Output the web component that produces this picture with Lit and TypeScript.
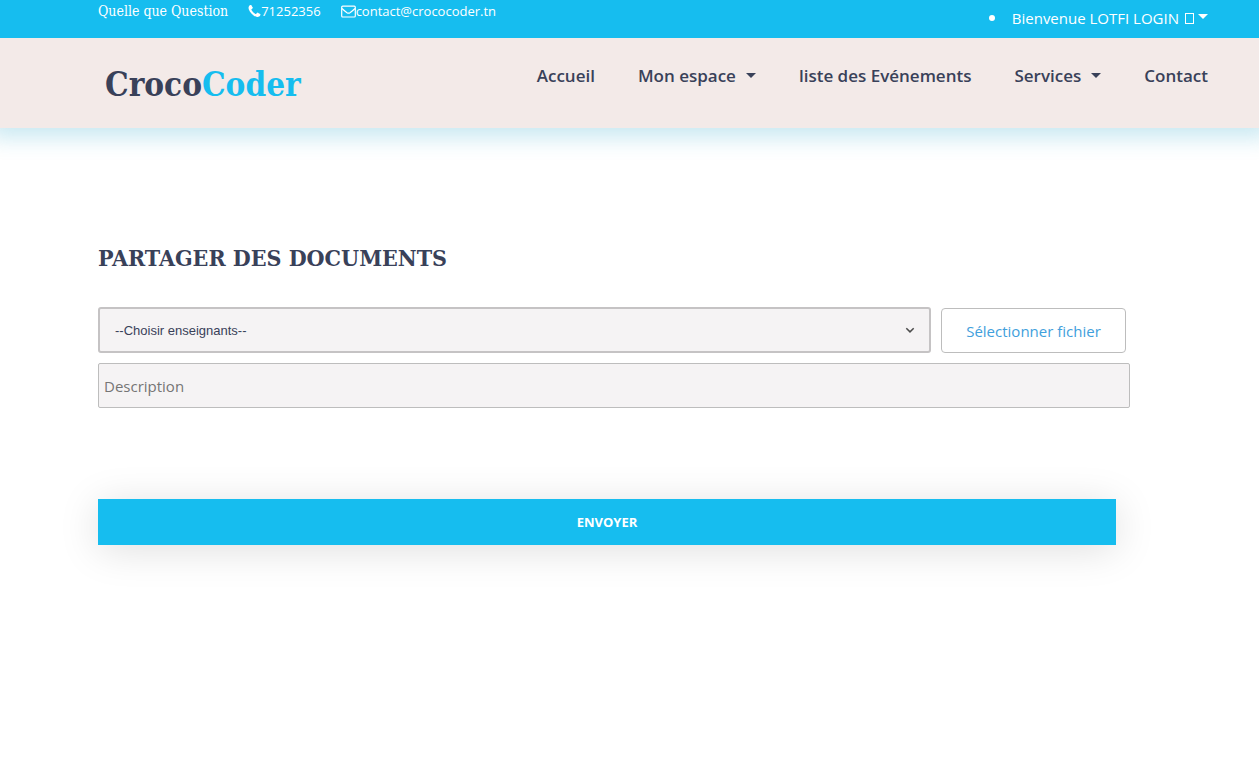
import { LitElement, html, css } from "lit";
import { customElement } from "lit/decorators.js";

@customElement("top-bar")
class TopBar extends LitElement {
  static styles = css`
    :host { display: block; background: #16bdef; color: #fff; font-size: 13px; line-height: 22px; }
    .bar { display: flex; justify-content: space-between; height: 38px; padding: 0 51px 0 98px; }
    .contact { display: flex; gap: 20px; }
    a { display: flex; align-items: center; color: inherit; text-decoration: none; height: 22px; }
    .question { font-family: "Roboto Slab", "DejaVu Serif Condensed", "DejaVu Serif", serif; font-stretch: condensed; font-size: 14px; }
    .user { margin: 7px 0 0; padding: 0; list-style: none; }
    .user li { display: flex; align-items: center; gap: 17px; }
    .dot { width: 6px; height: 6px; border-radius: 50%; background: #fff; }
    .account { font-size: 15px; }
    .glyph { width: 7px; height: 9px; border: 1px solid #fff; margin: 0 4px 0 6px; }
    .caret { border: 5px solid transparent; border-top-color: #fff; border-bottom: 0; margin-bottom: 4px; }
  `;
  render() {
    return html`
      <div class="bar">
        <div class="contact">
          <a class="question" href="#">Quelle que Question</a>
          <a href="tel:71252356">
            <svg width="13" height="13" viewBox="0 0 1408 1536" fill="#fff" aria-hidden="true">
              <path d="M1408 1112q0 27-10 70.500t-21 68.500q-21 50-122 106-94 51-186 51-27 0-53-3.500t-57.500-12.500-47-14.500-55.500-20.500-49-18q-98-35-175-83-127-79-264-216t-216-264q-48-77-83-175-3-9-18-49t-20.500-55.500-14.500-47-12.500-57.500-3.500-53q0-92 51-186 56-101 106-122 25-11 68.500-21t70.500-10q14 0 21 3 18 6 53 76 11 19 30 54t35 63.500 31 53.500q3 4 17.500 25t21.500 35.500 7 28.500q0 20-28.500 50t-62 55-62 53-28.500 46q0 9 5 22.500t8.500 20.500 14 24 11.500 19q76 137 174 235t235 174q2 1 19 11.500t24 14 20.500 8.500 22.500 5q18 0 46-28.500t53-62 55-62 50-28.500q14 0 28.500 7t35.500 21.500 25 17.500q25 15 53.500 31t63.500 35 54 30q70 35 76 53 3 7 3 21z"/>
            </svg>71252356</a>
          <a href="mailto:contact@crococoder.tn">
            <svg width="15" height="13" viewBox="0 0 15 13" fill="none" stroke="#fff" stroke-width="1.200" aria-hidden="true">
              <rect x=".7" y="1.200" width="13.600" height="10.800" rx="1"/>
              <path d="M1 3.500Q3 5.500 6 7.700Q7.500 8.700 9 7.700Q12 5.500 14 3.500"/>
            </svg>contact@crococoder.tn</a>
        </div>
        <ul class="user">
          <li><span class="dot"></span><a class="account" href="#">Bienvenue LOTFI LOGIN<span class="glyph"></span><span class="caret"></span></a></li>
        </ul>
      </div>`;
  }
}

@customElement("site-header")
class SiteHeader extends LitElement {
  static styles = css`
    :host { display: block; background: #f3eae8; color: #394159; box-shadow: 0 0 20px 10px rgba(24, 160, 200, 0.23); }
    .header { display: flex; justify-content: space-between; align-items: flex-start; height: 90px; padding: 0 51px 0 105px; }
    a { color: inherit; text-decoration: none; }
    .logo { font: bold 33px/48px "Roboto Slab", "DejaVu Serif Condensed", "DejaVu Serif", serif; font-stretch: condensed; margin-top: 23px; }
    .accent { color: #16bdef; }
    nav { display: flex; gap: 43px; margin-top: 24px; font-size: 17px; font-weight: 600; line-height: 28px; white-space: nowrap; }
    .item { display: flex; align-items: center; gap: 10px; }
    .caret { border: 5px solid transparent; border-top-color: #394159; border-bottom: 0; margin-bottom: 2px; }
  `;
  render() {
    const items: [string, boolean][] = [
      ["Accueil", false], ["Mon espace", true], ["liste des Evénements", false], ["Services", true], ["Contact", false],
    ];
    return html`
      <header class="header">
        <a class="logo" href="#">Croco<span class="accent">Coder</span></a>
        <nav>
          ${items.map(([name, menu]) => html`<a class="item" href="#">${name}${menu ? html`<span class="caret"></span>` : ""}</a>`)}
        </nav>
      </header>`;
  }
}

@customElement("share-form")
class ShareForm extends LitElement {
  static styles = css`
    :host { display: block; padding: 112px 129px 0 98px; color: #394159; }
    * { box-sizing: border-box; }
    h1 { margin: 0 0 31px; font: bold 23px/36px "Roboto Slab", "DejaVu Serif Condensed", "DejaVu Serif", serif; font-stretch: condensed; }
    .row { display: flex; align-items: center; gap: 10px; padding-right: 4px; margin-bottom: 10px; }
    .picker { position: relative; flex: 1; display: flex; }
    select { appearance: none; width: 100%; height: 46px; padding: 0 15px; border: 2px solid #c5c3c4; border-radius: 3px; background: #f5f3f4; color: #394159; font: 13px "Liberation Sans", Arial, sans-serif; }
    .arrow { position: absolute; right: 16px; top: 20px; pointer-events: none; }
    .file { position: relative; width: 185px; height: 45px; border: 1px solid #bdbdbd; border-radius: 4px; background: #fff; color: #41a0dc; font-size: 15px; line-height: 45px; text-align: center; white-space: nowrap; }
    .file input { position: absolute; inset: 0; width: 100%; opacity: 0; }
    .description { display: block; width: 100%; height: 45px; padding: 0 5px; border: 1px solid #bdbdbd; border-radius: 2px; background: #f5f3f4; font: inherit; font-size: 15px; color: #394159; }
    .description::placeholder { color: #757575; opacity: 1; }
    .actions { padding: 91px 14px 0 0; }
    button { display: block; width: 100%; height: 46px; border: 0; background: #16bdef; color: #fff; font: inherit; font-size: 13px; font-weight: 700; box-shadow: 0 5px 40px rgba(0, 0, 0, 0.13); }
  `;
  render() {
    return html`
      <h1>PARTAGER DES DOCUMENTS</h1>
      <form>
        <div class="row">
          <div class="picker">
            <select aria-label="Choisir enseignants"><option>--Choisir enseignants--</option></select>
            <svg class="arrow" width="10" height="7" viewBox="0 0 10 7" fill="none" stroke="#4c4c4c" stroke-width="1.500"><path d="M1.300 1.200L5 4.900L8.700 1.200"/></svg>
          </div>
          <label class="file">Sélectionner fichier<input type="file"></label>
        </div>
        <input class="description" type="text" placeholder="Description" aria-label="Description">
        <div class="actions"><button type="button">ENVOYER</button></div>
      </form>`;
  }
}

@customElement("app-root")
class AppRoot extends LitElement {
  static styles = css`
    :host { display: block; min-height: 100vh; overflow-x: clip; background: #fff; font-family: "Segoe UI", "Open Sans", "Noto Sans", sans-serif; }
    top-bar { position: relative; z-index: 1; }
  `;
  render() {
    return html`<top-bar></top-bar><site-header></site-header><share-form></share-form>`;
  }
}
